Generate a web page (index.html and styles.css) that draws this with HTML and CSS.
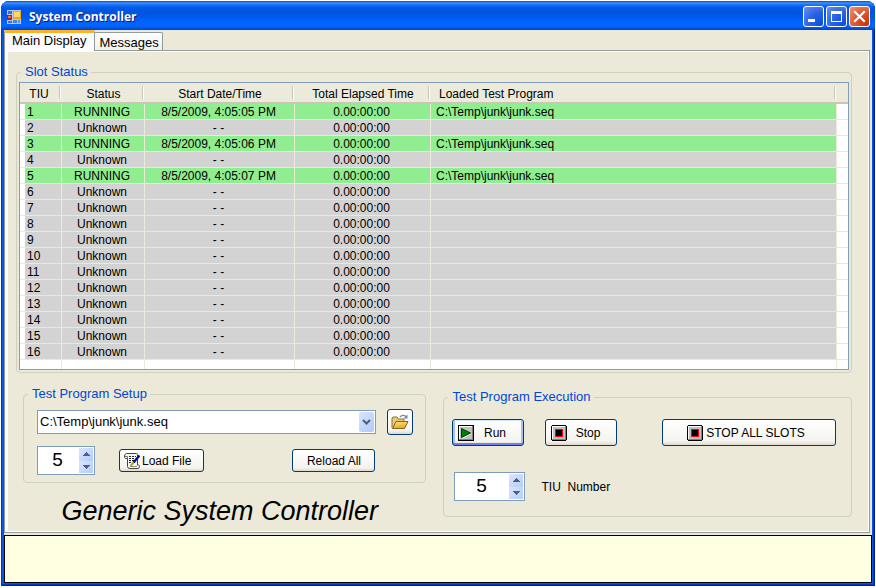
FILE: index.html
```html
<!DOCTYPE html>
<html lang="en">
<head>
<meta charset="utf-8">
<title>System Controller</title>
<link rel="stylesheet" href="styles.css">
</head>
<body>
<svg class="defs" aria-hidden="true">
  <symbol id="stop-icon" viewBox="0 0 16 16" shape-rendering="crispEdges">
    <rect x="1" width="14" height="16"/><rect y="1" width="16" height="14"/>
    <rect x="1" y="1" width="14" height="14" fill="#808080"/>
    <rect x="1" y="1" width="13" height="13" fill="#fff"/>
    <rect x="2" y="2" width="12" height="12" fill="#c0c0c0"/>
    <rect x="4" y="4" width="8" height="8" fill="#f00"/><rect x="5" y="5" width="6" height="6"/>
  </symbol>
  <symbol id="up" viewBox="0 0 7 4" shape-rendering="crispEdges"><path d="M3 0h1v1h1v1h1v1h1v1H0V3h1V2h1V1h1z" fill="#4d6185"/></symbol>
  <symbol id="down" viewBox="0 0 7 4" shape-rendering="crispEdges"><path d="M0 0h7v1H6v1H5v1H4v1H3V3H2V2H1V1H0z" fill="#4d6185"/></symbol>
</svg>
<div class="window">
  <header class="titlebar">
    <svg width="14" height="14" viewBox="0 0 14 14" shape-rendering="crispEdges" aria-hidden="true">
      <rect width="14" height="14" fill="#b8c8ea"/>
      <rect x="1" y="1" width="4" height="3" fill="#3a6de0"/>
      <rect x="0" y="5" width="5" height="5" fill="#b81810"/><rect x="1" y="6" width="3" height="2" fill="#f07060"/>
      <rect x="6" y="1" width="8" height="8" fill="#e8a820"/><rect x="7" y="2" width="6" height="5" fill="#ffd860"/>
      <rect x="1" y="11" width="4" height="2" fill="#3a6de0"/>
      <rect x="6" y="10" width="4" height="3" fill="#4a80ee"/><rect x="11" y="10" width="2" height="3" fill="#6090f0"/>
    </svg>
    <span class="title">System Controller</span>
    <button class="caption" aria-label="Minimize"><svg width="19" height="19" viewBox="0 0 19 19" shape-rendering="crispEdges"><path d="M4 12h7v3H4z" fill="#fff"/></svg></button>
    <button class="caption" aria-label="Maximize"><svg width="19" height="19" viewBox="0 0 19 19" shape-rendering="crispEdges"><path d="M4 4h11v11H4zM5 7v7h9V7z" fill="#fff" fill-rule="evenodd"/></svg></button>
    <button class="caption close" aria-label="Close"><svg width="19" height="19" viewBox="0 0 19 19"><path d="M5 5l9 9M14 5l-9 9" stroke="#fff" stroke-width="2.2" stroke-linecap="square"/></svg></button>
  </header>
  <nav class="tabs" role="tablist">
    <button class="tab active" role="tab" aria-selected="true">Main Display</button>
    <button class="tab" role="tab" aria-selected="false">Messages</button>
  </nav>
  <main class="panel">
    <fieldset>
      <legend>Slot Status</legend>
      <div class="slots">
        <table>
          <colgroup><col class="c-tiu"><col class="c-status"><col class="c-start"><col class="c-time"><col><col class="c-end"></colgroup>
          <thead><tr><th>TIU</th><th>Status</th><th>Start Date/Time</th><th>Total Elapsed Time</th><th>Loaded Test Program</th><th></th></tr></thead>
          <tbody>
            <tr class="running"><td>1</td><td>RUNNING</td><td>8/5/2009, 4:05:05 PM</td><td>0.00:00:00</td><td>C:\Temp\junk\junk.seq</td><td></td></tr>
            <tr><td>2</td><td>Unknown</td><td>- -</td><td>0.00:00:00</td><td></td><td></td></tr>
            <tr class="running"><td>3</td><td>RUNNING</td><td>8/5/2009, 4:05:06 PM</td><td>0.00:00:00</td><td>C:\Temp\junk\junk.seq</td><td></td></tr>
            <tr><td>4</td><td>Unknown</td><td>- -</td><td>0.00:00:00</td><td></td><td></td></tr>
            <tr class="running"><td>5</td><td>RUNNING</td><td>8/5/2009, 4:05:07 PM</td><td>0.00:00:00</td><td>C:\Temp\junk\junk.seq</td><td></td></tr>
            <tr><td>6</td><td>Unknown</td><td>- -</td><td>0.00:00:00</td><td></td><td></td></tr>
            <tr><td>7</td><td>Unknown</td><td>- -</td><td>0.00:00:00</td><td></td><td></td></tr>
            <tr><td>8</td><td>Unknown</td><td>- -</td><td>0.00:00:00</td><td></td><td></td></tr>
            <tr><td>9</td><td>Unknown</td><td>- -</td><td>0.00:00:00</td><td></td><td></td></tr>
            <tr><td>10</td><td>Unknown</td><td>- -</td><td>0.00:00:00</td><td></td><td></td></tr>
            <tr><td>11</td><td>Unknown</td><td>- -</td><td>0.00:00:00</td><td></td><td></td></tr>
            <tr><td>12</td><td>Unknown</td><td>- -</td><td>0.00:00:00</td><td></td><td></td></tr>
            <tr><td>13</td><td>Unknown</td><td>- -</td><td>0.00:00:00</td><td></td><td></td></tr>
            <tr><td>14</td><td>Unknown</td><td>- -</td><td>0.00:00:00</td><td></td><td></td></tr>
            <tr><td>15</td><td>Unknown</td><td>- -</td><td>0.00:00:00</td><td></td><td></td></tr>
            <tr><td>16</td><td>Unknown</td><td>- -</td><td>0.00:00:00</td><td></td><td></td></tr>
          </tbody>
          <tfoot><tr><td></td><td></td><td></td><td></td><td></td><td></td></tr></tfoot>
        </table>
      </div>
    </fieldset>
    <div class="lower">
      <div class="left">
        <fieldset>
          <legend>Test Program Setup</legend>
          <div class="setup">
            <div class="row file-row">
              <div class="combo">
                <select aria-label="Test program"><option>C:\Temp\junk\junk.seq</option></select>
                <span class="drop"><svg width="9" height="6" viewBox="0 0 9 6" aria-hidden="true"><path d="M1 1l3.500 3.500L8 1" fill="none" stroke="#4d6185" stroke-width="2.2"/></svg></span>
              </div>
              <button class="btn browse" aria-label="Browse">
                <svg width="18" height="16" viewBox="0 0 18 16">
                  <defs><linearGradient id="fold" x2="0.300" y2="1"><stop offset="0" stop-color="#ffe98c"/><stop offset="1" stop-color="#eaa520"/></linearGradient></defs>
                  <path d="M1 14V4l1-1h4l1 2h6v3" fill="#e8ca74" stroke="#8e7440"/>
                  <path d="M1.500 14.500L5 7.500h12l-3.500 7z" fill="url(#fold)" stroke="#856425"/>
                  <path d="M9 3c2-2.500 5-2 6 0" fill="none" stroke="#7288a8" stroke-width="1.300"/><path d="M12.500 4.500h4V0.500z" fill="#7288a8"/>
                </svg>
              </button>
            </div>
            <div class="row load-row">
              <div class="spin spin-slot">
                <input type="text" inputmode="numeric" value="5" aria-label="Slot">
                <span class="arrows"><button aria-label="Increase"><svg width="7" height="4"><use href="#up"/></svg></button><button aria-label="Decrease"><svg width="7" height="4"><use href="#down"/></svg></button></span>
              </div>
              <button class="btn load">
                <svg width="16" height="16" viewBox="0 0 16 16" aria-hidden="true">
                  <path d="M2.500 0.500h10q1 0 1 1v10.500h1q1 0 1 1.500t-1.500 2H6q-2.500 0-2.500-2V5.500H1.500Q0.500 5 0.500 3t2-2.500z" fill="#f6f6f6" stroke="#444"/>
                  <path d="M1 3.500h2.500V6" fill="none" stroke="#777"/>
                  <path d="M5 3.500h7M5 5.500h6M5 7.500h5M5 9.500h3" stroke="#222" stroke-dasharray="2 1"/>
                  <path d="M15.500 2.500l-6 7" stroke="#001090" stroke-width="2.400"/><path d="M9.500 9.500L6.500 13" stroke="#b5a820" stroke-width="2"/><path d="M6 13.500h7" stroke="#888"/>
                </svg>
                Load File
              </button>
              <button class="btn reload">Reload All</button>
            </div>
          </div>
        </fieldset>
        <h1>Generic System Controller</h1>
      </div>
      <fieldset class="right">
        <legend>Test Program Execution</legend>
        <div class="exec">
          <div class="row run-row">
            <button class="btn tall default">
              <svg width="16" height="16" viewBox="0 0 16 16" aria-hidden="true">
                <g shape-rendering="crispEdges"><path d="M0 0h16v16H0z"/><path d="M1 1h14v14H1z" fill="#808080"/><path d="M1 1h13v13H1z" fill="#fff"/><path d="M2 2h12v12H2z" fill="#c0c0c0"/></g>
                <path d="M4 13L13 8v1l-9 5z" fill="#fff"/><path d="M3.500 3.500v9L12.500 8z" fill="#008000" stroke="#033d03"/>
              </svg><span>Run</span>
            </button>
            <button class="btn tall"><svg width="16" height="16" aria-hidden="true"><use href="#stop-icon"/></svg><span>Stop</span></button>
            <button class="btn tall all"><svg width="16" height="16" aria-hidden="true"><use href="#stop-icon"/></svg>STOP ALL SLOTS</button>
          </div>
          <div class="row tiu-row">
            <div class="spin spin-tiu">
              <input id="tiu" type="text" inputmode="numeric" value="5">
              <span class="arrows"><button aria-label="Increase"><svg width="7" height="4"><use href="#up"/></svg></button><button aria-label="Decrease"><svg width="7" height="4"><use href="#down"/></svg></button></span>
            </div>
            <label for="tiu">TIU&nbsp; Number</label>
          </div>
        </div>
      </fieldset>
    </div>
  </main>
  <div class="log" role="status"></div>
</div>
</body>
</html>
```
FILE: styles.css
```css
* { box-sizing: border-box; }

body {
  margin: 0;
  padding: 1px 1px 2px;
  min-height: 100vh;
  display: flex;
  background: #fff;
  color: #000;
  font: 12px/14px "Liberation Sans", Arial, sans-serif;
}

button, input, select { font: inherit; color: inherit; margin: 0; padding: 0; border: 0; }
svg { display: block; flex: none; }
.defs { position: absolute; width: 0; height: 0; }

.window {
  flex: 1;
  min-width: 0;
  display: flex;
  flex-direction: column;
  padding: 0 3px 3px;
  border-radius: 8px 8px 0 0;
  background: #0a55e4;
  box-shadow: inset 1px 0 #0831d9, inset -1px -1px #001ea0, inset -2px -2px #0437d0;
}

/* Title bar */
.titlebar {
  display: flex;
  align-items: center;
  gap: 2px;
  height: 29px;
  margin: 0 -3px;
  padding: 2px 5px 0 6px;
  border-radius: 8px 8px 0 0;
  background: linear-gradient(#0a48d0 0, #3c92ff 2px, #1470f4 4px, #0058e6 7px, #0054e0 13px, #0062fa 20px, #0068ff 25px, #0054e4 27px, #0040c8 29px);
}
.title {
  flex: 1;
  padding: 1px 0 0 6px;
  color: #fff;
  font: bold 12px/16px "Open Sans", sans-serif;
  text-shadow: 1px 1px #0a1883;
}
.caption {
  width: 21px;
  height: 21px;
  border: 1px solid #fff;
  border-radius: 3px;
  background: radial-gradient(circle at 90% 90%, #0a50d8 0, #2c62e4 50%, #6890f0 100%);
}
.caption.close { background: radial-gradient(circle at 90% 90%, #c83408 0, #e0542c 50%, #f09078 100%); }

/* Tabs */
.tabs {
  display: flex;
  align-items: flex-end;
  height: 20px;
  background: #ece9d8;
}
.tab {
  height: 18px;
  padding: 2px 3px 0 4px;
  border: 1px solid #919b9c;
  border-width: 1px 1px 0 0;
  border-radius: 0 2px 0 0;
  background: linear-gradient(#fff, #f0f0ea);
  font-size: 13px;
  line-height: 15px;
}
.tab.active {
  position: relative;
  height: 21px;
  margin-bottom: -1px;
  padding: 0 8px 3px 7px;
  border-top: 3px solid #ffb428;
  border-left: 1px solid #919b9c;
  border-radius: 2px 2px 0 0;
  background: #fcfcfe;
}

.panel {
  flex: 1;
  padding: 13px 17px 4px 11px;
  border: 1px solid #919b9c;
  background: #ece9d8;
  box-shadow: inset 3px 0 #fcfcfe, inset -1px 1px #fff, inset 0 -1px #fff, 2px 0 #ece9d8;
  margin-right: 2px;
}

.log {
  flex: none;
  height: 50px;
  border-top: 2px solid #ece9d8;
  background: #ffffe1;
  box-shadow: inset 0 0 0 1px #000;
}

/* Group boxes */
fieldset {
  min-width: 0;
  margin: 0;
  padding: 0;
  border: 1px solid #d0d0bf;
  border-radius: 4px;
}
legend {
  margin-left: 4px;
  padding: 0 3px 0 4px;
  color: #0046d5;
  font-size: 13px;
  line-height: 16px;
}

/* Slot list */
.slots {
  margin: 2px;
  border: 1px solid #7f9db9;
  background: #fff;
}
table {
  width: 100%;
  table-layout: fixed;
  border-spacing: 0;
}
.c-tiu { width: 42px; }
.c-status { width: 83px; }
.c-start { width: 150px; }
.c-time { width: 136px; }
.c-end { width: 11px; }
th {
  height: 21px;
  padding: 2px 0 0;
  border-bottom: 2px solid #cbc7b8;
  background: #ebeadb linear-gradient(90deg, #c7c5b2 1px, #fff 1px) no-repeat calc(100% - 1px) 3px / 2px 13px;
  font-weight: normal;
}
th:first-child { padding-right: 4px; }
th:nth-child(5) { padding-left: 8px; text-align: left; }
th:last-child { background: #ebeadb; }
td {
  height: 16px;
  padding: 1px 2px 0 0;
  border-right: 1px solid #ece9d8;
  border-bottom: 1px solid #ece9d8;
  background-color: #d3d3d3;
  text-align: center;
}
td:first-child {
  padding-left: 7px;
  background-image: linear-gradient(#fff, #fff);
  background-repeat: no-repeat;
  background-size: 5px 100%;
  text-align: left;
}
td:nth-child(5) { padding-left: 5px; text-align: left; }
.running td { background-color: #90ee90; }
td:last-child, .running td:last-child { border-right: 0; background-color: #fff; }
tfoot td { height: 9px; padding: 0; border-bottom: 0; background: #fff; }

/* Lower section */
.lower {
  display: grid;
  grid-template-columns: 403fr 408fr;
  gap: 17px;
  align-items: start;
  margin: 13px 0 0 7px;
}
.right { margin-top: 3px; }
.row { display: flex; align-items: center; }
.setup { padding: 9px 12px 7px 13px; }
.file-row { gap: 11px; height: 26px; margin-top: -2px; }
.load-row { gap: 24px; margin-top: 11px; }
.exec { padding: 14px 15px 15px 8px; }
.run-row { gap: 21px; }
.tiu-row { gap: 16px; margin-top: 26px; padding-left: 2px; }

h1 {
  margin: 11px 0 0;
  padding-right: 10px;
  font: italic 27px/34px "Liberation Sans", Arial, sans-serif;
  text-align: center;
  white-space: nowrap;
}

.btn {
  display: flex;
  align-items: center;
  justify-content: center;
  height: 23px;
  border: 1px solid #003c74;
  border-radius: 3px;
  background: linear-gradient(#fff, #f4f3ee 85%, #dcd8cc);
  white-space: nowrap;
}
.browse { width: 26px; height: 26px; }
.load { width: 85px; gap: 2px; justify-content: flex-start; padding-left: 4px; }
.reload { width: 83px; margin: 0 38px 0 auto; }
.tall { width: 72px; height: 27px; }
.tall:not(.all) { justify-content: flex-start; padding-left: 5px; }
.tall span { flex: 1; padding-right: 8px; }
.default { box-shadow: inset 0 1px #cee7ff, inset 0 -2px #6982ee, inset 2px 0 #a9c0f2, inset -2px 0 #a9c0f2; }
.all { width: 174px; margin-left: auto; padding-right: 6px; gap: 3px; }

.combo {
  flex: 1;
  display: flex;
  height: 24px;
  position: relative;
}
.combo select {
  flex: 1;
  min-width: 0;
  appearance: none;
  padding: 0 20px 0 2px;
  border: 1px solid #7f9db9;
  border-radius: 0;
  background: #fff;
  font-size: 13px;
}
.drop {
  position: absolute;
  top: 2px;
  right: 2px;
  bottom: 2px;
  width: 15px;
  display: grid;
  place-items: center;
  border-radius: 2px;
  background: linear-gradient(135deg, #dce6fe, #aec8f7);
  pointer-events: none;
}

.spin {
  display: flex;
  height: 29px;
  padding: 1px;
  border: 1px solid #7f9db9;
  background: #fff;
}
.spin-slot { width: 58px; }
.spin-tiu { width: 71px; }
.spin input {
  flex: 1;
  width: 0;
  padding: 0 3px 2px 0;
  background: none;
  font-size: 19px;
  text-align: center;
}
.arrows { display: flex; flex-direction: column; width: 14px; }
.arrows button {
  flex: 1;
  display: grid;
  place-items: center;
  background: linear-gradient(135deg, #dce6fe, #b4ccf8);
}
```
